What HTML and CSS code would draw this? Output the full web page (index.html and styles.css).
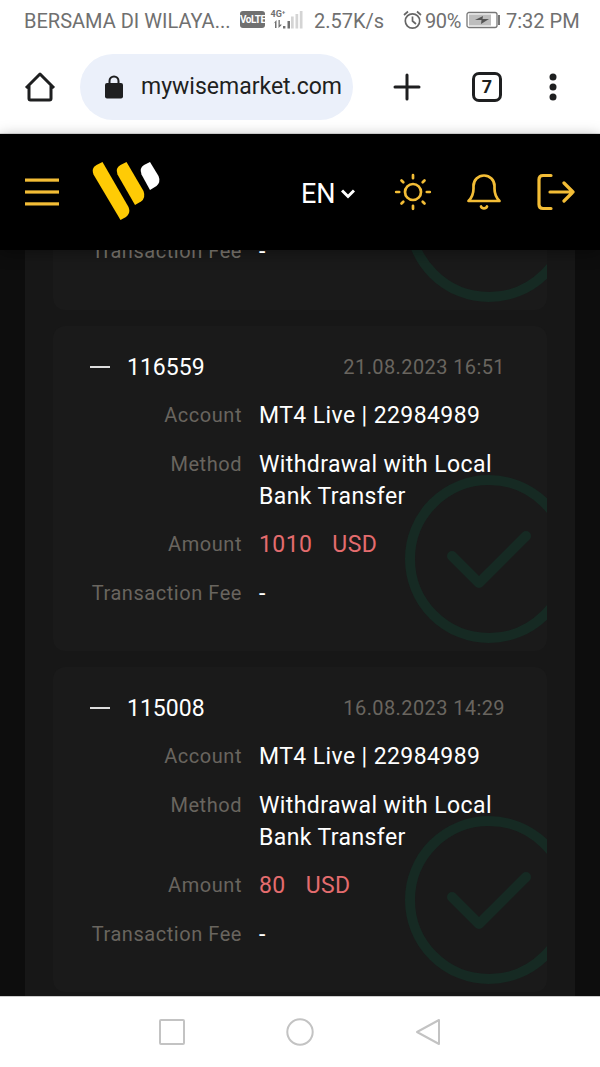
FILE: index.html
```html
<!DOCTYPE html>
<html lang="en">
<head>
<meta charset="utf-8">
<title>Wise Market</title>
<link rel="stylesheet" href="styles.css">
</head>
<body>
<div class="phone">
  <div class="status">
    <span class="carrier">BERSAMA DI WILAYA...</span>
    <span class="volte">VoLTE</span>
    <svg class="signal" width="34" height="22" viewBox="0 0 34 22">
      <text class="net" x="0.5" y="8">4G⁺</text>
      <g fill="#707070"><path d="M6.5 11v8H5v-5.500l-1.500 1z M8.500 11h1.300v5l1.500-1v1.500l-2.800 2.500z"/><rect x="13" y="17" width="2.400" height="2.500"/><rect x="17.500" y="12" width="2.500" height="7.500"/></g>
      <g fill="#d4d4d4"><rect x="21" y="7.500" width="2.700" height="12"/><rect x="25.500" y="5" width="2.700" height="14.500"/><rect x="29.800" y="2" width="2.700" height="17.500"/></g>
    </svg>
    <span class="speed">2.57K/s</span>
    <svg class="alarm" width="20" height="20" viewBox="0 0 20 20" fill="none" stroke="#666" stroke-width="1.700"><circle cx="9.500" cy="11" r="7.200"/><path d="M9.500 6.500V11l3.500 3M1 5l4-3.500M18 5l-4-3.500"/></svg>
    <span class="pct">90%</span>
    <svg class="battery" width="36" height="18" viewBox="0 0 36 18"><rect x="1" y="1.500" width="30" height="15" rx="2" fill="#fff" stroke="#777" stroke-width="1.300"/><rect x="3" y="3.500" width="22" height="11" fill="#bdbdbd"/><path d="M9 9l8-4-.5 3H23l-8 5 .5-4z" fill="#555"/><rect x="32" y="4" width="2" height="10" fill="#777"/></svg>
    <span class="clock">7:32 PM</span>
  </div>
  <div class="browser">
    <svg class="home" width="32" height="32" viewBox="0 0 32 32" fill="none" stroke="#1e1f20" stroke-width="3" stroke-linejoin="round"><path d="M2 17L16 3l14 14M5 14.500V27.500q0 1.500 1.500 1.500h19q1.500 0 1.500-1.500V14.500"/></svg>
    <div class="url">
      <svg width="18" height="24" viewBox="0 0 18 24"><path d="M4.500 9V6a4.500 4.500 0 0 1 9 0v3" fill="none" stroke="#1e1f20" stroke-width="2"/><rect y="8" width="18" height="15.500" rx="2" fill="#1e1f20"/></svg>
      <span>mywisemarket.com</span>
    </div>
    <svg class="plus" width="28" height="28" viewBox="0 0 28 28" stroke="#1e1f20" stroke-width="3" stroke-linecap="round"><path d="M14 2v24M2 14h24"/></svg>
    <span class="tabs">7</span>
    <svg class="dots" width="8" height="28" viewBox="0 0 8 28" fill="#1e1f20"><circle cx="4" cy="4" r="3.500"/><circle cx="4" cy="14" r="3.500"/><circle cx="4" cy="24" r="3.500"/></svg>
  </div>
  <header class="bar">
    <svg class="menu" width="34" height="28" viewBox="0 0 34 28" fill="#f3bd36"><rect y="0.500" width="34" height="3.200"/><rect y="12.400" width="34" height="3.200"/><rect y="24.300" width="34" height="3.200"/></svg>
    <svg class="logo" width="70" height="60" viewBox="0 0 70 60"><path d="M1.500 12.500Q-1 6 4.500 3L10.500 0 36.500 45Q39 51 34 55L28.500 58z" fill="#ffcb05"/><path d="M25.500 12.500Q23 6 28.500 3L34.500 0 51.500 29Q54 36 49 39.500L43 43z" fill="#ffcb05"/><path d="M49.500 12.500Q47 6 52 3L58 0 66.500 14Q69 20 64.500 24L58 28z" fill="#fff"/></svg>
    <span class="lang">EN</span>
    <svg class="chev" width="14" height="10" viewBox="0 0 14 10" fill="none" stroke="#fff" stroke-width="3"><path d="M1 1.500l6 6 6-6"/></svg>
    <svg class="sun" width="38" height="38" viewBox="0 0 38 38" fill="none" stroke="#f3bd36" stroke-width="2.700" stroke-linecap="round"><circle cx="19" cy="19" r="8"/><path d="M19 2.200v3M19 32.800v3M2.200 19h3M32.800 19h3M7.500 7.500l1.800 1.800M28.700 28.700l1.800 1.800M7.500 30.500l1.800-1.800M28.700 9.300l1.800-1.800"/></svg>
    <svg class="bell" width="36" height="38" viewBox="0 0 36 38" fill="none" stroke="#f3bd36" stroke-width="2.700" stroke-linecap="round" stroke-linejoin="round"><path d="M2.500 28C6 24.500 7.500 21 7.500 15.500V13a10.500 10.500 0 0 1 21 0v2.500C28.500 21 30 24.500 33.500 28z"/><path d="M15 33.500c1 2.500 5 2.500 6 0"/></svg>
    <svg class="exit" width="38" height="38" viewBox="0 0 38 38" fill="none" stroke="#f3bd36" stroke-width="3.200" stroke-linecap="round" stroke-linejoin="round"><path d="M14 2.500H6q-4 0-4 4v25q0 4 4 4h8M13 19h23M27 10l9 9-9 9"/></svg>
  </header>
  <main class="page">
    <div class="panel">
      <article class="card cut">
        <dl class="rows"><dt>Transaction Fee</dt><dd><span class="w-dash">-</span></dd></dl>
        <svg class="mark" width="168" height="168" viewBox="0 0 168 168"><circle cx="84" cy="84" r="79"/><path d="M47 81l27 27 47-47"/></svg>
      </article>
      <article class="card">
        <div class="head"><i class="minus"></i><span class="id">116559</span><time class="d1">21.08.2023 16:51</time></div>
        <dl class="rows">
          <dt>Account</dt><dd class="acc">MT4 Live | 22984989</dd>
          <dt>Method</dt><dd>Withdrawal with Local<br><span class="bank">Bank Transfer</span></dd>
          <dt>Amount</dt><dd class="red"><span>1010</span><span>USD</span></dd>
          <dt>Transaction Fee</dt><dd>-</dd>
        </dl>
        <svg class="mark" width="168" height="168" viewBox="0 0 168 168"><circle cx="84" cy="84" r="79"/><path d="M47 81l27 27 47-47"/></svg>
      </article>
      <article class="card">
        <div class="head"><i class="minus"></i><span class="id">115008</span><time>16.08.2023 14:29</time></div>
        <dl class="rows">
          <dt>Account</dt><dd class="acc">MT4 Live | 22984989</dd>
          <dt>Method</dt><dd>Withdrawal with Local<br><span class="bank">Bank Transfer</span></dd>
          <dt>Amount</dt><dd class="red"><span>80</span><span>USD</span></dd>
          <dt>Transaction Fee</dt><dd>-</dd>
        </dl>
        <svg class="mark" width="168" height="168" viewBox="0 0 168 168"><circle cx="84" cy="84" r="79"/><path d="M47 81l27 27 47-47"/></svg>
      </article>
    </div>
  </main>
  <nav class="nav">
    <svg width="28" height="28" viewBox="0 0 28 28"><rect x="2" y="2" width="24" height="24" rx="1"/></svg>
    <svg width="28" height="28" viewBox="0 0 28 28"><circle cx="14" cy="14" r="12.700"/></svg>
    <svg width="28" height="28" viewBox="0 0 28 28"><path d="M25 2v24L3 14z"/></svg>
  </nav>
</div>
</body>
</html>
```
FILE: styles.css
```css
* { box-sizing: border-box; }
body { margin: 0; font-family: Roboto, sans-serif; background: #fff; }
svg { display: block; flex: none; }
.phone { width: 600px; height: 1067px; display: flex; flex-direction: column; overflow: hidden; }
.status { height: 40px; flex: none; display: flex; align-items: center; padding: 2px 0 0 24px; color: #707070; font-size: 20px; white-space: nowrap; }
.carrier { width: 216px; }
.volte { width: 25px; height: 17px; margin-top: -3px; border-radius: 3px; background: #707070; color: #fff; font-size: 10px; line-height: 17px; font-weight: 700; text-align: center; letter-spacing: -0.5px; }
.signal { margin-left: 5px; margin-top: -2px; }
.net { font: 700 9px Roboto, sans-serif; fill: #707070; }
.speed { margin-left: 10px; width: 89px; }
.alarm { margin-top: -3px; }
.pct { margin-left: 2px; width: 41px; letter-spacing: -0.4px; }
.battery { margin-top: -3px; }
.clock { margin-left: 4px; }
.browser { height: 94px; flex: none; display: flex; align-items: center; padding: 0 0 0 24px; border-bottom: 1px solid #e0e0e0; color: #1e1f20; }
.url { margin-left: 24px; width: 273px; height: 66px; border-radius: 33px; background: #ebf0fa; display: flex; align-items: center; padding-left: 25px; gap: 18px; font-size: 23px; }
.plus { margin-left: 40px; }
.tabs { margin-left: 51px; width: 30px; height: 30px; border: 3px solid #1e1f20; border-radius: 7px; font-size: 18px; font-weight: 700; line-height: 24px; text-align: center; }
.dots { margin-left: 47px; }
.bar { height: 116px; flex: none; background: #000; display: flex; align-items: center; padding-left: 25px; position: relative; z-index: 1; box-shadow: 0 3px 14px rgba(0,0,0,.35); }
.logo { margin-left: 33px; }
.lang { width: 39px; margin-left: 139px; color: #fff; font-size: 27px; padding-top: 3px; }
.chev { margin-left: 1px; margin-top: 4px; }
.sun { margin-left: 39px; }
.bell { margin-left: 34px; }
.exit { margin-left: 35px; }
.page { flex: 1; min-height: 0; overflow: hidden; background: #0d0d0d; padding: 0 25px; }
.panel { background: #171717; padding: 0 28px; height: 100%; display: flex; flex-direction: column; gap: 16px; }
.card { position: relative; flex: none; height: 325px; overflow: hidden; border-radius: 12px; background: #1a1a1a; padding: 25px 42px 0 37px; }
.cut { height: 60px; border-radius: 0 0 12px 12px; padding-top: 0; }
.cut .rows { margin-top: -14px; }
.head { height: 32px; display: flex; align-items: center; color: #fff; }
.minus { width: 20px; height: 2px; background: #ddd; margin-right: 17px; }
.id { font-size: 23px; letter-spacing: 0; }
time { margin-left: auto; color: #69655f; font-size: 20px; letter-spacing: 0.4px; }
.rows { margin: 17px 0 0; display: grid; grid-template-columns: 152px 1fr; column-gap: 17px; row-gap: 17px; color: #fff; font-size: 23px; line-height: 31.800px; white-space: nowrap; position: relative; z-index: 1; }
dt { color: #69655f; font-size: 20px; text-align: right; letter-spacing: 0.55px; }
dd { margin: 0; letter-spacing: 0.4px; }
.red { color: #e46c6e; display: flex; gap: 20px; }
.mark { position: absolute; right: -26px; bottom: 8px; fill: none; stroke: #162a23; stroke-width: 10px; stroke-linecap: round; stroke-linejoin: round; }
.nav { height: 71px; flex: none; display: flex; justify-content: center; align-items: center; gap: 100px; background: #fff; border-top: 1px solid #ccc; fill: none; stroke: #c3c3c3; stroke-width: 2px; stroke-linejoin: round; }
```
